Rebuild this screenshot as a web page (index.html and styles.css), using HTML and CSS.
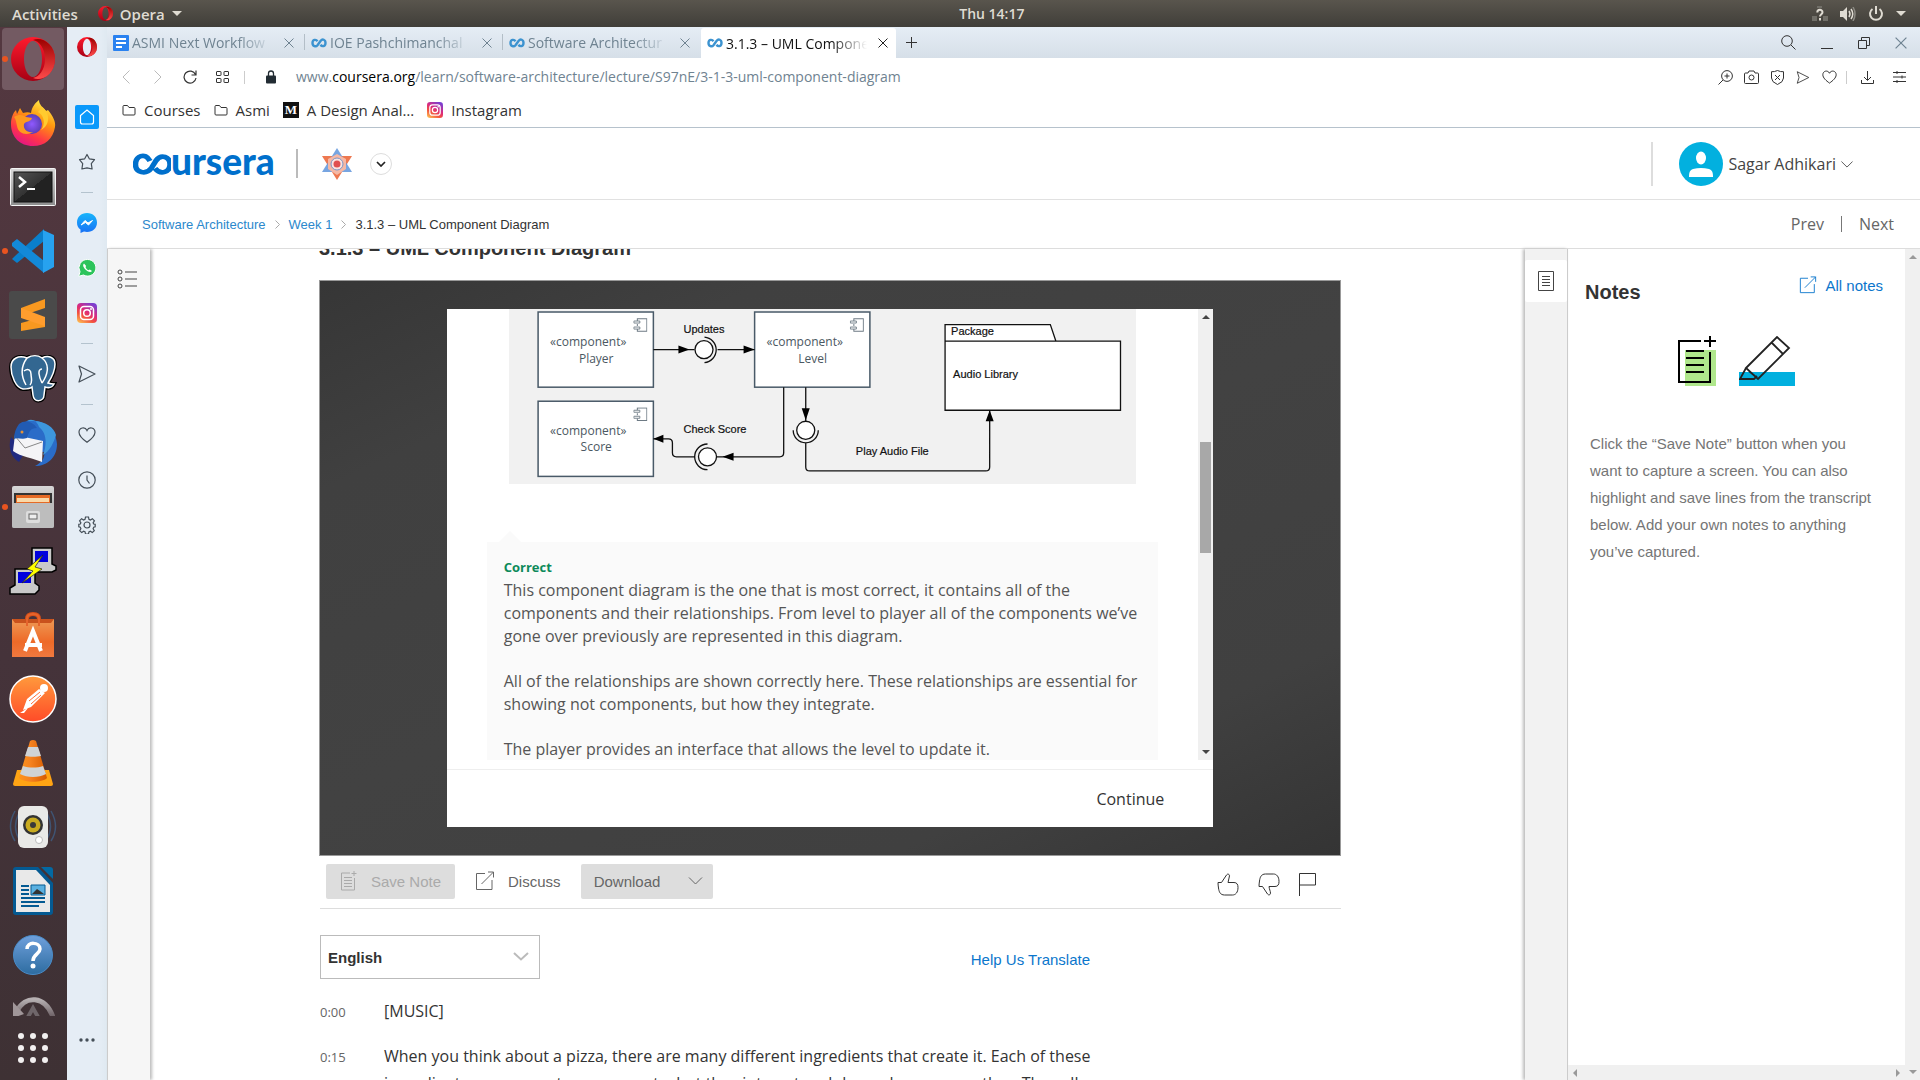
FILE: index.html
```html
<!DOCTYPE html>
<html lang="en">
<head>
<meta charset="utf-8">
<title>3.1.3 – UML Component Diagram</title>
<link rel="stylesheet" href="styles.css">
</head>
<body>
<svg class="defs" width="0" height="0" aria-hidden="true">
  <defs>
    <linearGradient id="opera-front" x1="0" y1="0" x2="0" y2="1"><stop offset="0" stop-color="#ff1b2d"/><stop offset="1" stop-color="#a70014"/></linearGradient>
    <linearGradient id="opera-back" x1="0" y1="0" x2="0" y2="1"><stop offset="0" stop-color="#9c0000"/><stop offset="1" stop-color="#ff4b4b"/></linearGradient>
    <linearGradient id="insta" x1="0.1" y1="1" x2="0.7" y2="0"><stop offset="0" stop-color="#fec053"/><stop offset="0.35" stop-color="#f2513f"/><stop offset="0.6" stop-color="#dd2a7b"/><stop offset="1" stop-color="#7b3fd0"/></linearGradient>
    <linearGradient id="fox" x1="0.8" y1="0" x2="0.3" y2="1"><stop offset="0" stop-color="#fff44f"/><stop offset="0.4" stop-color="#ff980e"/><stop offset="0.75" stop-color="#ff3647"/><stop offset="1" stop-color="#e31587"/></linearGradient>
    <radialGradient id="fox-core"><stop offset="0" stop-color="#9059ff"/><stop offset="1" stop-color="#5b3fb5"/></radialGradient>
    <linearGradient id="metal" x1="0" y1="0" x2="0" y2="1"><stop offset="0" stop-color="#d8d8d8"/><stop offset="1" stop-color="#8e8e8e"/></linearGradient>
    <linearGradient id="screen" x1="0" y1="0" x2="1" y2="1"><stop offset="0" stop-color="#555"/><stop offset="0.5" stop-color="#333"/><stop offset="0.5" stop-color="#222"/></linearGradient>
    <linearGradient id="postman" x1="0" y1="0" x2="0" y2="1"><stop offset="0" stop-color="#ff9a3c"/><stop offset="1" stop-color="#ff4b28"/></linearGradient>
    <linearGradient id="bag" x1="0" y1="0" x2="0" y2="1"><stop offset="0" stop-color="#ee9a55"/><stop offset="0.6" stop-color="#ee6a28"/><stop offset="1" stop-color="#f0793f"/></linearGradient>
    <linearGradient id="cone" x1="0" y1="0" x2="1" y2="0"><stop offset="0" stop-color="#ff9418"/><stop offset="0.4" stop-color="#f58220"/><stop offset="1" stop-color="#d65b00"/></linearGradient>
    <linearGradient id="help" x1="0" y1="0" x2="0" y2="1"><stop offset="0" stop-color="#6fa0dc"/><stop offset="1" stop-color="#2d6ca0"/></linearGradient>
    <linearGradient id="fade" x1="0" y1="0" x2="0" y2="1"><stop offset="0" stop-color="#b5afb1"/><stop offset="1" stop-color="#6b5f63"/></linearGradient>
    <linearGradient id="msgr" x1="0" y1="0" x2="0" y2="1"><stop offset="0" stop-color="#18b5fb"/><stop offset="1" stop-color="#1971f5"/></linearGradient>
    <symbol id="i-opera" viewBox="0 0 44 44"><path d="M22 0a22 22 0 1 0 0 44a22 22 0 1 0 0-44zM22 4c5 0 9 8 9 18s-4 18-9 18-9-8-9-18 4-18 9-18z" fill="url(#opera-front)" fill-rule="evenodd"/><path d="M22 3c8-4 22 3 22 19S30 45 22 41c6-1 12-8 12-19S28 4 22 3z" fill="url(#opera-back)"/></symbol>
    <symbol id="i-close" viewBox="0 0 10 10"><path d="M.5.5l9 9M9.500.5l-9 9" fill="none" stroke="currentColor"/></symbol>
    <symbol id="i-inf" viewBox="0 0 16 10"><path d="M6.500 3.200C5 1 1.500 1.500 1.500 5s3.500 4 5 2.200l3-4.200c2-2.500 5-1.500 5 2s-3.500 4-5 1.800" fill="none" stroke="#3c93d0" stroke-width="2.400"/></symbol>
    <symbol id="i-folder" viewBox="0 0 14 12"><path d="M1 2.500a1 1 0 0 1 1-1h3.500l1.500 2h5a1 1 0 0 1 1 1V10a1 1 0 0 1-1 1H2a1 1 0 0 1-1-1z" fill="none" stroke="#333"/></symbol>
    <symbol id="i-insta" viewBox="0 0 20 20"><rect width="20" height="20" rx="4" fill="url(#insta)"/><rect x="3.500" y="3.500" width="13" height="13" rx="3.500" fill="none" stroke="#fff" stroke-width="1.500"/><circle cx="10" cy="10" r="3.300" fill="none" stroke="#fff" stroke-width="1.500"/><circle cx="14" cy="6" r="1" fill="#fff"/></symbol>
    <symbol id="i-send" viewBox="0 0 18 18"><path d="M1 1l16 8-16 8 2.500-8z" fill="none" stroke="currentColor" stroke-width="1.200" stroke-linejoin="round"/></symbol>
    <symbol id="i-heart" viewBox="0 0 18 16"><path d="M9 15.300C5 12.500 1 9 1 5.300 1 .5 7-.8 9 3.500 11-.8 17 .5 17 5.300 17 9 13 12.500 9 15.300z" fill="none" stroke="currentColor" stroke-width="1.200"/></symbol>
    <symbol id="i-out" viewBox="0 0 20 20"><path d="M10 2.500H1.500v16H17V9M6.500 13L18.500 1M13 1h5.500v5.500" fill="none" stroke="currentColor"/></symbol>
    <symbol id="i-chev" viewBox="0 0 14 8"><path d="M.5.5L7 7 13.500.5" fill="none" stroke="currentColor"/></symbol>
    <symbol id="i-comp" viewBox="0 0 14 14"><path d="M4 3V.7h9.500v12.600H4V11M4 6v2" fill="none" stroke="#6d7a84"/><path d="M.5 3h6v2h-6zM.5 9h6v2h-6z" fill="#fff" stroke="#6d7a84" stroke-width=".9"/></symbol>
    <symbol id="i-thumb" viewBox="0 0 22 23"><path d="M1 9.500h3.500L9.500 2c.8-1.500 3-1 3 .8 0 2-1.300 4.200-1.500 6.700h6c3 0 4 2 4 5 0 5-2.500 7.500-5.500 7.500H7.500C3 22 2 18.500 1.500 15c-.3-2-.5-4-.5-5.500z" fill="none" stroke="currentColor"/></symbol>
  </defs>
</svg>

<header class="topbar">
  <button class="top-item" type="button">Activities</button>
  <button class="top-item top-app" type="button"><svg width="15" height="15"><use href="#i-opera"/></svg>Opera<span class="caret"></span></button>
  <time class="clock">Thu 14:17</time>
  <button class="tray" type="button" aria-label="System menu">
    <svg width="16" height="16" viewBox="0 0 16 16"><path d="M0 10h5v5H0zM11 10h5v5h-5zM5 0h5v2H5z" fill="#716f68"/><path d="M5.300 6.500C5.300 3 10.500 3 10.500 6.200c0 2-2.500 2-2.500 4.300M8 12v2.500" fill="none" stroke="#dfdbd2" stroke-width="2"/></svg>
    <svg width="16" height="14" viewBox="0 0 16 14"><path d="M0 4h3l4-4v14l-4-4H0z" fill="#dfdbd2"/><path d="M9 4q2 3 0 6M11 2q3.500 5 0 10" fill="none" stroke="#dfdbd2" stroke-width="1.500"/><path d="M13 0q4 7 0 14" fill="none" stroke="#8b8982" stroke-width="1.500"/></svg>
    <svg width="16" height="16" viewBox="0 0 16 16"><path d="M4.500 3a6 6 0 1 0 7 0M8 0v8" fill="none" stroke="#dfdbd2" stroke-width="2"/></svg>
    <span class="caret"></span>
  </button>
</header>

<div class="desktop">
  <nav class="dock" aria-label="Applications">
    <div class="dock-list">
      <button class="dock-app running active" type="button" aria-label="Opera"><svg width="44" height="44"><use href="#i-opera"/></svg></button>
      <button class="dock-app" type="button" aria-label="Firefox"><svg width="48" height="48" viewBox="0 0 48 48"><path d="M24 47C11 47 2 38 2 25c0-6 2-11 5-14l1 4 3-6 3 5c3-1 6-1 8 0 1-6 4-10 8-13 0 5 4 7 7 11l2-1c5 6 8 12 7 17-2 12-10 19-22 19z" fill="url(#fox)"/><circle cx="23" cy="25" r="10" fill="url(#fox-core)"/><path d="M5 18c5-3 9-2 12 0l6 1c-1 4-6 3-8 6-1 5 3 9 9 8-6 4-15 2-16-6-1-4-1-7-3-9z" fill="#ff9a1f"/><path d="M29 13c6 3 8 12 3 18 10-5 9-18 1-23z" fill="#ffcb2f"/></svg></button>
      <button class="dock-app" type="button" aria-label="Terminal"><svg width="48" height="40" viewBox="0 0 48 40"><rect x="1.500" y="1.500" width="45" height="37" rx="1" fill="url(#metal)" stroke="#f4f4f4"/><rect x="5" y="5" width="38" height="30" fill="url(#screen)" stroke="#111"/><path d="M10 10l6 5-6 5" fill="none" stroke="#fff" stroke-width="2.500"/><path d="M18 22h8" stroke="#fff" stroke-width="2"/></svg></button>
      <button class="dock-app running" type="button" aria-label="Visual Studio Code"><svg width="44" height="44" viewBox="0 0 44 44"><path d="M1 30l5 4L33 12V0L4 27z" fill="#0a7fcb"/><path d="M1 14l5-4 27 22v12L1 17z" fill="#1389d8"/><path d="M32 1l11 5v32l-11 6z" fill="#27a2ef"/></svg></button>
      <button class="dock-app" type="button" aria-label="Sublime Text"><svg width="48" height="48" viewBox="0 0 48 48"><rect width="48" height="48" rx="3" fill="#4a4a4a"/><path d="M12 17l24-9v9l-15 5 15 5v9l-24 4v-8l15-4-15-4z" fill="#f89820"/><path d="M12 17l24 9v9L12 27z" fill="#ff9d2e"/></svg></button>
      <button class="dock-app" type="button" aria-label="pgAdmin"><svg width="48" height="48" viewBox="0 0 48 48"><g fill="#336791" stroke="#000" stroke-width="4"><path d="M14 34C7 33 2 21 2 12 2 3 10 0 18 3c5-3 11-3 15 0 6-3 13-1 13 6 0 6-3 13-7 19 3 1 5 1 6 1-2 4-6 4-9 3l-1 8c0 7-10 8-11 0l-1-8c-2 2-6 2-9 2z"/></g><path d="M14 34C7 33 2 21 2 12 2 3 10 0 18 3c5-3 11-3 15 0 6-3 13-1 13 6 0 6-3 13-7 19 3 1 5 1 6 1-2 4-6 4-9 3l-1 8c0 7-10 8-11 0l-1-8c-2 2-6 2-9 2zM18 3c-6 8-6 18-1 27M33 3c9 7 5 18 0 25M15 16c4-3 7-1 7 3s2 8-1 11M33 14c-5 0-3 8 0 14" fill="#336791" stroke="#fff" stroke-width="1.500"/></svg></button>
      <button class="dock-app" type="button" aria-label="Thunderbird"><svg width="48" height="48" viewBox="0 0 48 48"><path d="M18 2C31-1 47 8 48 25c0 14-10 22-22 22 8-4 10-9 9-14L6 30C4 20 6 8 18 2z" fill="#2a6cc8"/><path d="M2 18C-1 27 1 38 10 43l6-10z" fill="#202a80"/><path d="M18 2c5-3 10 0 12 6 8 6 8 18 4 28 7-4 11-13 13-20-2-8-12-15-25-14z" fill="#3d97dd"/><path d="M6 16l28 6-1 21C24 39 12 38 4 32z" fill="#f4f4f6"/><path d="M6 17l10 12 17-6" fill="none" stroke="#888"/><path d="M10 5c6-5 14-2 18 4-7 0-8 4-10 10-5 2-10-1-13 1 0-6 2-11 5-15z" fill="#215bb3"/><circle cx="13" cy="13" r="1.500" fill="#e59236"/></svg></button>
      <button class="dock-app running" type="button" aria-label="Files"><svg width="44" height="44" viewBox="0 0 44 44"><rect x="1" y="1" width="42" height="42" rx="2" fill="url(#metal)"/><path d="M3 8h38v10H3z" fill="#333"/><path d="M5 10h34v8H5z" fill="#e56a25"/><path d="M6 13h32v4H6z" fill="#f8d8a8"/><path d="M1 18h42v23a2 2 0 0 1-2 2H3a2 2 0 0 1-2-2z" fill="#bdbdbd"/><rect x="15" y="26" width="14" height="12" rx="2" fill="#ddd"/><rect x="18" y="29" width="8" height="5" fill="#eee" stroke="#666"/></svg></button>
      <button class="dock-app" type="button" aria-label="PuTTY"><svg width="48" height="48" viewBox="0 0 48 48"><g fill="#c9c9c9" stroke="#000" stroke-width="1.500"><path d="M23 1h20v16l4 2v4l-4 2H22l-2-3 3-3z"/><path d="M6 22h20v14l4 3v4l-4 4H1v-6l5-3z"/></g><path d="M26 4h13v11H26zM9 25h13v11H9z" fill="#00d"/><path d="M34 8L18 22l6 2-11 12 20-14-7-2z" fill="#ff0" stroke="#222" stroke-width=".7"/></svg></button>
      <button class="dock-app" type="button" aria-label="Ubuntu Software"><svg width="44" height="46" viewBox="0 0 44 46"><path d="M16 14V7q0-5 6-5t6 5v7" fill="none" stroke="#d9501a" stroke-width="4"/><path d="M1 7h42v38H1z" fill="url(#bag)"/><path d="M1 7h42l-3 4H4z" fill="#c9521d"/><path d="M16 14V7q0-5 6-5t6 5v7" fill="none" stroke="#e5642c" stroke-width="2"/><path d="M14 39l8-20 8 20M14 33h17" fill="none" stroke="#fff" stroke-width="4"/></svg></button>
      <button class="dock-app" type="button" aria-label="Postman"><svg width="48" height="48" viewBox="0 0 48 48"><circle cx="24" cy="24" r="23" fill="url(#postman)" stroke="#fff" stroke-width="1.500"/><path d="M18 24l12-10 6 4-14 14-8 3zM17 34l-6 4h4l4-5z" fill="#fff"/><circle cx="35" cy="13" r="4" fill="#fff"/><path d="M20 26l11-9M22 29l10-9" stroke="#ff7038"/></svg></button>
      <button class="dock-app" type="button" aria-label="VLC"><svg width="42" height="48" viewBox="0 0 42 48"><path d="M5 31h32l4 14q0 2-2 2H3q-2 0-2-2z" fill="#ffa414"/><path d="M18 2q3-2 6 0l11 37c-5 5-23 5-28 0z" fill="url(#cone)"/><path d="M16 8h10l3 9c-4 1-12 1-16 0zM11 27c6 2 14 2 20 0l3 8c-7 4-19 4-26 0z" fill="#cfd3d6"/></svg></button>
      <button class="dock-app" type="button" aria-label="Rhythmbox"><svg width="48" height="48" viewBox="0 0 48 48"><path d="M6 8q-9 16 0 30M10 10q-7 14 0 26M42 8q9 16 0 30M38 10q7 14 0 26" fill="none" stroke="#3f5473" stroke-width="1.500"/><rect x="9" y="3" width="30" height="42" rx="6" fill="#e9e9e7"/><circle cx="24" cy="22" r="10" fill="#333"/><circle cx="24" cy="22" r="7.500" fill="#c9ab20"/><circle cx="24" cy="22" r="3" fill="#3a3a3a"/><circle cx="30" cy="37" r="3.500" fill="#fff" stroke="#bbb"/></svg></button>
      <button class="dock-app" type="button" aria-label="LibreOffice Writer"><svg width="40" height="48" viewBox="0 0 40 48"><path d="M3 0h22l15 16v29q0 3-3 3H3q-3 0-3-3V3q0-3 3-3z" fill="#045a92"/><path d="M28 0h9q3 0 3 3v9z" fill="#0369a3"/><path d="M3 3h20l14 15v27H3z" fill="#e9e9e9"/><path d="M8 19h8M8 23h8M8 27h8M8 31h24M8 35h24M8 39h18" stroke="#045a92" stroke-width="2"/><path d="M18 18h14v10H18z" fill="#5ab0e0" stroke="#045a92"/><path d="M19 27l5-5 3 2 4 3z" fill="#333"/></svg></button>
      <button class="dock-app" type="button" aria-label="Help"><svg width="40" height="40" viewBox="0 0 40 40"><circle cx="20" cy="20" r="19.500" fill="url(#help)" stroke="#4a8cc8"/><path d="M14 14c0-8 13-7 13 0 0 5-7 5-7 12" fill="none" stroke="#fff" stroke-width="3.500"/><circle cx="20" cy="31" r="2.500" fill="#fff"/></svg></button>
      <button class="dock-app" type="button" aria-label="Software Updater"><svg width="44" height="44" viewBox="0 0 44 44"><path d="M6 14C14-2 34-2 42 20" fill="none" stroke="url(#fade)" stroke-width="5"/><path d="M2 5v16l11-4z" fill="#a09699"/><path d="M17 20l5-9 5 9" fill="none" stroke="#6f666a" stroke-width="4"/></svg></button>
    </div>
    <button class="dock-grid" type="button" aria-label="Show applications"><svg width="30" height="30" viewBox="0 0 30 30" fill="#f2f0f0"><circle cx="3" cy="3" r="3"/><circle cx="15" cy="3" r="3"/><circle cx="27" cy="3" r="3"/><circle cx="3" cy="15" r="3"/><circle cx="15" cy="15" r="3"/><circle cx="27" cy="15" r="3"/><circle cx="3" cy="27" r="3"/><circle cx="15" cy="27" r="3"/><circle cx="27" cy="27" r="3"/></svg></button>
  </nav>

  <aside class="side" aria-label="Opera sidebar">
    <button class="side-logo" type="button" aria-label="Opera menu"><svg width="20" height="20"><use href="#i-opera"/></svg></button>
    <button class="side-item" type="button" aria-label="Speed dial"><svg width="24" height="24" viewBox="0 0 24 24"><rect width="24" height="24" rx="2" fill="#0a99fb"/><path d="M5.500 10.500L12 5l6.500 5.500V17q0 2-2 2h-9q-2 0-2-2z" fill="none" stroke="#fff" stroke-width="1.200"/></svg></button>
    <button class="side-item" type="button" aria-label="Bookmarks"><svg width="18" height="18" viewBox="0 0 18 18"><path d="M9 1.500l2.300 4.300 5.200.9-3.200 4 .8 5.300L9 14.800 3.900 16l.8-5.300-3.200-4 5.200-.9z" fill="none" stroke="currentColor" stroke-width="1.200" stroke-linejoin="round"/></svg></button>
    <hr>
    <button class="side-item" type="button" aria-label="Messenger"><svg width="20" height="20" viewBox="0 0 20 20"><path d="M10 0c6 0 10 4 10 9.500S16 19 10 19l-3-.5L3.500 20v-3.500C1 15 0 12.500 0 9.500 0 4 4 0 10 0z" fill="url(#msgr)"/><path d="M4 12l4-4.500 3 2.500 4.500-2.500-4 4.500-3-2.500z" fill="#fff" stroke="#fff"/></svg></button>
    <button class="side-item" type="button" aria-label="WhatsApp"><svg width="18" height="18" viewBox="0 0 18 18"><path d="M9.500.5a8.300 8.300 0 1 1-4 15.500L.7 17.300 2 12.800A8.300 8.300 0 0 1 9.500.5z" fill="#2cc45c" stroke="#fff"/><path d="M6 4.500c-2 2 0 4.500 2 6.500 2 1.700 4.500 3 6 1l-2.200-1.500-1.300.8C9 10.500 8 9.500 7.500 8l.7-1z" fill="#fff"/></svg></button>
    <button class="side-item" type="button" aria-label="Instagram"><svg width="20" height="20"><use href="#i-insta"/></svg></button>
    <hr>
    <button class="side-item" type="button" aria-label="My Flow"><svg width="18" height="18"><use href="#i-send"/></svg></button>
    <hr>
    <button class="side-item" type="button" aria-label="Favorites"><svg width="18" height="16"><use href="#i-heart"/></svg></button>
    <button class="side-item" type="button" aria-label="History"><svg width="18" height="18" viewBox="0 0 18 18"><circle cx="9" cy="9" r="8.200" fill="none" stroke="currentColor" stroke-width="1.200"/><path d="M9 4.500V9l2.500 3.500" fill="none" stroke="currentColor" stroke-width="1.200"/></svg></button>
    <button class="side-item" type="button" aria-label="Settings"><svg width="18" height="18" viewBox="0 0 18 18" fill="none" stroke="currentColor" stroke-width="1.200"><circle cx="9" cy="9" r="3"/><path d="M7.500 1h3l.4 2.300 1.500.7 2-1.300 2 2.100-1.300 2 .6 1.200 1.500.3v2.400l-1.500.5-.6 1.500 1.200 1.900-2 2-2-1.300-1.400.6-.4 2.100h-3l-.4-2.100-1.400-.6-2 1.300-2-2 1.200-1.900-.6-1.500L.8 10.700V8.300L2.300 8l.6-1.200-1.300-2 2-2.100 2 1.300L7 3.300z"/></svg></button>
    <button class="side-item side-more" type="button" aria-label="More"><svg width="16" height="4" viewBox="0 0 16 4" fill="#454f58"><circle cx="2" cy="2" r="1.700"/><circle cx="8" cy="2" r="1.700"/><circle cx="14" cy="2" r="1.700"/></svg></button>
  </aside>

  <div class="browser">
    <div class="tabs">
      <div class="tab"><svg width="16" height="16" viewBox="0 0 16 16"><rect width="16" height="16" rx="1" fill="#2a82f0"/><path d="M3 4h10M3 8h10M3 12h6" stroke="#fff" stroke-width="2"/></svg><span class="tab-title">ASMI Next Workflow</span><button type="button" aria-label="Close tab"><svg width="10" height="10"><use href="#i-close"/></svg></button></div>
      <div class="tab"><svg width="16" height="10"><use href="#i-inf"/></svg><span class="tab-title">IOE Pashchimanchal</span><button type="button" aria-label="Close tab"><svg width="10" height="10"><use href="#i-close"/></svg></button></div>
      <div class="tab"><svg width="16" height="10"><use href="#i-inf"/></svg><span class="tab-title">Software Architectur</span><button type="button" aria-label="Close tab"><svg width="10" height="10"><use href="#i-close"/></svg></button></div>
      <div class="tab current"><svg width="16" height="10"><use href="#i-inf"/></svg><span class="tab-title">3.1.3 – UML Compone</span><button type="button" aria-label="Close tab"><svg width="10" height="10"><use href="#i-close"/></svg></button></div>
      <button class="new-tab" type="button" aria-label="New tab"><svg width="11" height="11" viewBox="0 0 11 11"><path d="M5.500 0v11M0 5.500h11" stroke="#333"/></svg></button>
      <div class="win-controls">
        <button type="button" aria-label="Search tabs"><svg width="15" height="15" viewBox="0 0 15 15"><circle cx="6" cy="6" r="5.300" fill="none" stroke="#333"/><path d="M10 10l4.500 4.500" stroke="#333"/></svg></button>
        <button type="button" aria-label="Minimize"><svg width="12" height="12" viewBox="0 0 12 12"><path d="M0 11.500h12" stroke="#333"/></svg></button>
        <button type="button" aria-label="Restore"><svg width="12" height="12" viewBox="0 0 12 12"><path d="M.5 3.500h8v8h-8zM3.500 3.500v-3h8v8h-3" fill="none" stroke="#333"/></svg></button>
        <button type="button" aria-label="Close window"><svg width="12" height="12"><use href="#i-close"/></svg></button>
      </div>
    </div>

    <div class="address">
      <div class="nav-buttons">
        <button type="button" aria-label="Back" disabled><svg width="8" height="14" viewBox="0 0 8 14"><path d="M7.500.5L1 7l6.500 6.500" fill="none" stroke="#bbb"/></svg></button>
        <button type="button" aria-label="Forward" disabled><svg width="8" height="14" viewBox="0 0 8 14"><path d="M.5.5L7 7 .5 13.500" fill="none" stroke="#bbb"/></svg></button>
        <button type="button" aria-label="Reload"><svg width="14" height="14" viewBox="0 0 14 14"><path d="M12.500 4.500A6 6 0 1 0 13 8M13 .5v4.500H8.500" fill="none" stroke="#333" stroke-width="1.200"/></svg></button>
        <button type="button" aria-label="Speed dial"><svg width="13" height="12" viewBox="0 0 13 12" fill="none" stroke="#333"><rect x=".5" y=".5" width="4.500" height="4" rx=".5"/><rect x="8" y=".5" width="4.500" height="4" rx=".5"/><rect x=".5" y="7.500" width="4.500" height="4" rx=".5"/><rect x="8" y="7.500" width="4.500" height="4" rx=".5"/></svg></button>
      </div>
      <span class="bar-rule"></span>
      <svg class="lock" width="10" height="14" viewBox="0 0 10 14"><path d="M2.500 6V3.500a2.500 2.500 0 0 1 5 0V6" fill="none" stroke="#222c33" stroke-width="1.300"/><rect y="5.500" width="10" height="8" rx="1" fill="#222c33"/></svg>
      <span class="url">www.<b>coursera.org</b>/learn/software-architecture/lecture/S97nE/3-1-3-uml-component-diagram</span>
      <div class="page-actions">
        <button type="button" aria-label="Zoom"><svg width="15" height="15" viewBox="0 0 15 15" fill="none" stroke="#333"><circle cx="9" cy="6" r="5.400"/><path d="M5 10L.5 14.500M9 3.500v5M6.500 6h5"/></svg></button>
        <button type="button" aria-label="Snapshot"><svg width="15" height="14" viewBox="0 0 15 14" fill="none" stroke="#333"><path d="M1.500 3H4l1-2h5l1 2h2.500q1 0 1 1v8.500q0 1-1 1h-12q-1 0-1-1V4q0-1 1-1z"/><circle cx="7.500" cy="7.500" r="2.500"/></svg></button>
        <button type="button" aria-label="Ad blocker"><svg width="13" height="15" viewBox="0 0 13 15" fill="none" stroke="#333"><path d="M6.500.5q3 1.500 6 1.200V8q0 4-6 6.500Q.5 12 .5 8V1.700q3 .3 6-1.200zM4 5l5 5M9 5l-5 5"/></svg></button>
        <button type="button" aria-label="Send to My Flow"><svg width="14" height="13"><use href="#i-send"/></svg></button>
        <button type="button" aria-label="Add bookmark"><svg width="15" height="14"><use href="#i-heart"/></svg></button>
        <span class="bar-rule"></span>
        <button class="wide" type="button" aria-label="Downloads"><svg width="13" height="13" viewBox="0 0 13 13" fill="none" stroke="#333"><path d="M6.500 0v9M3 6l3.500 3.500L10 6M.5 9v3.500h12V9"/></svg></button>
        <button class="wide" type="button" aria-label="Easy setup"><svg width="13" height="12" viewBox="0 0 13 12" fill="none" stroke="#333"><path d="M0 1.500h13M0 6h13M0 10.500h13M4 0v3M9 4.500v3M4 9v3"/></svg></button>
      </div>
    </div>

    <div class="bookmarks">
      <a href="#"><svg width="14" height="12"><use href="#i-folder"/></svg>Courses</a>
      <a href="#"><svg width="14" height="12"><use href="#i-folder"/></svg>Asmi</a>
      <a href="#"><span class="medium">M</span>A Design Anal…</a>
      <a href="#"><svg width="16" height="16"><use href="#i-insta"/></svg>Instagram</a>
    </div>

    <div class="page">
      <header class="site-head">
        <a class="brand" href="#" aria-label="coursera"><svg width="38" height="30" viewBox="0 0 38 30"><path d="M17 10.500C12-.5 2.500 5 2.500 14.500S13 27 18.500 18.500L23 10C28.500 1.500 37 6 37 14.500S28 27.500 22 19" transform="translate(0 3) scale(1 .86)" fill="none" stroke="#0070cc" stroke-width="5.500"/></svg><span>ursera</span></a>
        <span class="brand-rule"></span>
        <svg class="emblem" width="32" height="34" viewBox="0 0 32 34"><path d="M1 9h30L16 33z" fill="#ee7850"/><path d="M16 1l15 24H1z" fill="#5f95dc" opacity=".85"/><path d="M7 12l9-5 9 5v10l-9 6-9-6z" fill="#f5b8a5"/><circle cx="16" cy="17" r="6" fill="#fbe3df" stroke="#7a96c8"/><circle cx="16" cy="17" r="3.500" fill="#e05050"/></svg>
        <button class="round" type="button" aria-label="Switch programme"><svg width="10" height="6" viewBox="0 0 10 6"><path d="M1 1l4 4 4-4" fill="none" stroke="#222" stroke-width="1.700"/></svg></button>
        <button class="user" type="button"><svg width="44" height="44" viewBox="0 0 44 44"><circle cx="22" cy="22" r="22" fill="#02b0df"/><ellipse cx="22" cy="16" rx="5" ry="6.500" fill="#fff"/><path d="M10 35c0-5 1-7 4-8q8-2 16 0c3 1 4 3 4 8z" fill="#fff"/></svg><span>Sagar Adhikari</span><svg class="user-chev" width="12" height="7"><use href="#i-chev"/></svg></button>
      </header>

      <div class="crumbs">
        <nav class="trail" aria-label="Breadcrumb">
          <a href="#">Software Architecture</a>
          <svg width="5" height="9" viewBox="0 0 5 9"><path d="M.5.5l4 4-4 4" fill="none" stroke="#aaa"/></svg>
          <a href="#">Week 1</a>
          <svg width="5" height="9" viewBox="0 0 5 9"><path d="M.5.5l4 4-4 4" fill="none" stroke="#aaa"/></svg>
          <span>3.1.3 – UML Component Diagram</span>
        </nav>
        <nav class="pager" aria-label="Lecture"><a href="#">Prev</a><span class="pager-rule"></span><a href="#">Next</a></nav>
      </div>

      <div class="body">
        <aside class="left-rail"><button type="button" aria-label="Course outline"><svg width="20" height="20" viewBox="0 0 20 20" fill="none" stroke="#444"><circle cx="3" cy="3" r="2"/><circle cx="3" cy="10" r="2"/><circle cx="3" cy="17" r="2"/><path d="M8 3h12M8 10h12M8 17h12"/></svg></button></aside>

        <main class="lecture">
          <h1>3.1.3 – UML Component Diagram</h1>
          <section class="video">
            <div class="quiz">
              <div class="quiz-view">
                <div class="quiz-scroll">
                  <svg class="diagram" viewBox="0 0 626 175" role="img" aria-label="UML component diagram">
                    <rect width="626" height="175" fill="#f1f1f1"/>
                    <g fill="#fff" stroke="#495a68" stroke-width="1.500"><rect x="29" y="3" width="115" height="75"/><rect x="245" y="3" width="115" height="75"/><rect x="29" y="92" width="115" height="75"/></g>
                    <use href="#i-comp" x="124" y="9" width="14" height="14"/><use href="#i-comp" x="340" y="9" width="14" height="14"/><use href="#i-comp" x="124" y="98" width="14" height="14"/>
                    <g class="d-comp"><text x="79" y="37">«component»</text><text x="87" y="54">Player</text><text x="295" y="37">«component»</text><text x="303" y="54">Level</text><text x="79" y="126">«component»</text><text x="87" y="142">Score</text></g>
                    <g fill="none" stroke="#111" stroke-width="1.300">
                      <path d="M144 40.500h41M208 40.500h37M195 28a12.800 12.800 0 0 1 0 25.500M144 129.500h15q4 0 4 4v10q0 4 4 4h18M207 147.500h63q4 0 4-4V78M198 134.700a12.800 12.800 0 0 0 0 25.600M296 78v34M283.500 121a12.500 12.500 0 0 0 25 0M296 134v23.500q0 4 4 4h175.500q4 0 4-4V101"/>
                      <g fill="#fff"><circle cx="194.500" cy="40.500" r="9"/><circle cx="198" cy="147.500" r="9"/><circle cx="296" cy="121" r="9"/><path d="M435 32V15.500h105l5.500 16.500M435 32h175v69H435z"/></g>
                    </g>
                    <path d="M169 36.500l11 4-11 4zM234 36.500l11 4-11 4zM154 125.500l-10 4 10 4zM224 143.500l-11 4 11 4zM292 99l4 12 4-12zM475.500 112l4-11 4 11z" fill="#000"/>
                    <g class="d-label"><text x="174" y="24">Updates</text><text x="174" y="124">Check Score</text><text x="346" y="146">Play Audio File</text><text x="441" y="26">Package</text><text x="443" y="69">Audio Library</text></g>
                  </svg>
                  <div class="feedback">
                    <strong>Correct</strong>
                    <p>This component diagram is the one that is most correct, it contains all of the components and their relationships. From level to player all of the components we’ve gone over previously are represented in this diagram.</p>
                    <p>All of the relationships are shown correctly here. These relationships are essential for showing not components, but how they integrate.</p>
                    <p>The player provides an interface that allows the level to update it.</p>
                  </div>
                </div>
                <div class="scrollbar dark"><i class="up"></i><i class="thumb"></i><i class="down"></i></div>
              </div>
              <div class="quiz-foot"><button type="button">Continue</button></div>
            </div>
          </section>

          <div class="actions">
            <button class="act filled muted" type="button" disabled><svg width="18" height="20" viewBox="0 0 18 20" fill="none" stroke="currentColor"><path d="M10 2H1.500v17h13V7M4 6.500h8M4 9.500h8M4 12.500h8M4 15.500h8M11.500 2.500h5M14 0v5"/></svg>Save Note</button>
            <button class="act" type="button"><svg width="20" height="20"><use href="#i-out"/></svg>Discuss</button>
            <button class="act filled download" type="button">Download<svg width="15" height="8"><use href="#i-chev"/></svg></button>
            <div class="react">
              <button type="button" aria-label="Like"><svg width="22" height="23"><use href="#i-thumb"/></svg></button>
              <button type="button" aria-label="Dislike"><svg width="22" height="23" viewBox="0 0 22 23"><g transform="translate(0 23) scale(1 -1)"><use href="#i-thumb" width="22" height="23"/></g></svg></button>
              <button type="button" aria-label="Report"><svg width="17" height="23" viewBox="0 0 17 23"><path d="M.5 23V.500h16V12H.5" fill="none" stroke="currentColor"/></svg></button>
            </div>
          </div>

          <div class="transcript">
            <div class="lang-row">
              <div class="lang"><select aria-label="Transcript language"><option>English</option></select><svg width="16" height="9" viewBox="0 0 16 9"><path d="M1 1l7 6.500L15 1" fill="none" stroke="#bbb" stroke-width="2"/></svg></div>
              <a href="#">Help Us Translate</a>
            </div>
            <div class="line"><time>0:00</time><p>[MUSIC]</p></div>
            <div class="line"><time>0:15</time><p>When you think about a pizza, there are many different ingredients that create it. Each of these ingredients, components are separate, but they interact and depend on one another. They all</p></div>
          </div>
        </main>

        <aside class="right-rail"><button type="button" aria-label="Notes"><svg width="16" height="20" viewBox="0 0 16 20" fill="none" stroke="#444"><path d="M.5.500h15v19H.5zM4 5.500h8M4 8.500h8M4 11.500h8M4 14.500h8"/></svg></button></aside>

        <aside class="notes">
          <div class="notes-main">
            <div class="notes-head"><h2>Notes</h2><a href="#"><svg width="18" height="18"><use href="#i-out"/></svg>All notes</a></div>
            <div class="notes-art">
              <svg width="38" height="50" viewBox="0 0 38 50"><path d="M7 14h31v36H7z" fill="#b0e78c"/><path d="M23 5H1v41h31V16M8 15h18M8 22h18M8 29h18M8 36h18M26 5h12M32 0v11" fill="none" stroke="#000" stroke-width="2"/></svg>
              <svg width="56" height="50" viewBox="0 0 56 50"><path d="M0 36h56v14H0z" fill="#02b0df"/><path d="M7 32L38 1l12 11-31 31zM33 7l11 11M7 32L1 43h14l3-3M10 35l7 6" fill="none" stroke="#222" stroke-width="1.800"/></svg>
            </div>
            <p>Click the “Save Note” button when you want to capture a screen. You can also highlight and save lines from the transcript below. Add your own notes to anything you’ve captured.</p>
            <div class="hbar"><i class="left"></i><i class="right"></i></div>
          </div>
          <div class="scrollbar"><i class="up"></i><i class="down"></i></div>
        </aside>
      </div>
    </div>
  </div>
</div>
</body>
</html>
```

FILE: styles.css
```css
*{box-sizing:border-box}
body{margin:0;height:100vh;overflow:hidden;display:flex;flex-direction:column;background:#fff;color:#333;font:16px "Open Sans","Noto Sans",sans-serif}
button{margin:0;padding:0;border:0;background:none;color:inherit;font:inherit;display:flex;align-items:center;justify-content:center}
a{text-decoration:none;color:#0b76cc}
h1,h2,p,hr{margin:0}
svg{flex:none;display:block}
.defs{position:absolute}

/* desktop bar */
.topbar{flex:none;height:27px;padding:0 14px 0 12px;display:grid;grid-template-columns:auto 1fr auto 1fr;align-items:center;background:linear-gradient(#59554d,#403e39);color:#dfdbd2;font-size:15px;font-weight:600}
.top-app{gap:7px;margin-left:20px;justify-self:start}
.caret{border:5px solid transparent;border-top-color:#dfdbd2;border-bottom:0}
.clock{font-size:14px}
.tray{gap:12px;justify-self:end}

.desktop{flex:1;min-height:0;display:flex}
.dock{flex:none;width:67px;display:flex;flex-direction:column;background:linear-gradient(#543840,#45333a 60%,#3e3134)}
.dock-list{flex:1;min-height:0;overflow:hidden}
.dock-app{position:relative;width:62px;height:62px;margin:1px 2px;border-radius:4px}
.dock-app + .dock-app{margin-top:2px}
.dock-app.active{background:#735a62}
.dock-app.running::before{content:"";position:absolute;left:0;top:28px;width:6px;height:6px;border-radius:50%;background:#e95420}
.dock-grid{flex:none;width:66px;height:64px}

.side{flex:none;width:40px;display:flex;flex-direction:column;background:linear-gradient(90deg,#e5edf5 80%,#dfe9f1);color:#454f58}
.side-logo{height:40px;margin-bottom:27px}
.side-item{height:45px}
.side hr{height:1px;width:12px;margin:8px auto 7px;border:0;background:#b4c3ce}
.side-more{margin-top:auto;margin-bottom:18px}

.browser{flex:1;min-width:0;display:flex;flex-direction:column}
.tabs{flex:none;height:31px;display:flex;background:linear-gradient(#e5edf5,#d6dfe8);font-size:14px;color:#6f8391}
.tab{width:198px;display:flex;align-items:center;gap:3px;padding:0 11px 0 6px;position:relative}
.tab:nth-child(-n+2)::after{content:"";position:absolute;right:0;top:7px;height:16px;width:1px;background:#b3bec7}
.tab-title{flex:1;overflow:hidden;white-space:nowrap;margin-right:8px;-webkit-mask-image:linear-gradient(90deg,#000 75%,transparent);mask-image:linear-gradient(90deg,#000 75%,transparent)}
.tab.current{width:195px;margin-top:1px;background:#fff;color:#111;border-radius:3px 3px 0 0;padding-right:8px}
.tab.current button{color:#222}
.new-tab{width:31px}
.win-controls{margin-left:auto;display:flex;align-items:center;gap:25px;padding-right:13px}

.address{flex:none;height:38px;display:flex;align-items:center}
.nav-buttons{display:flex;margin-left:3px}
.nav-buttons button{width:32px}
.bar-rule{width:1px;height:13px;background:#ccc}
.nav-buttons + .bar-rule{margin-left:6px}
.lock{margin:0 20px 0 21px}
.url{color:#6f8391;font-size:14px;line-height:20px;white-space:nowrap}
.url b{font-weight:400;color:#000}
.page-actions{margin-left:auto;display:flex;align-items:center;padding-right:5px}
.page-actions button{width:26px}
.page-actions .bar-rule{margin:0 4px}
.page-actions .wide{width:32px}

.bookmarks{flex:none;height:32px;padding:0 15px 4px;display:flex;align-items:center;gap:13px;border-bottom:1px solid #b6c2cc;font-size:15px}
.bookmarks a{display:flex;align-items:center;gap:8px;color:#333}
.medium{width:16px;height:16px;background:#111;color:#fff;font:bold 13px/16px "Liberation Serif",serif;text-align:center}

/* page */
.page{flex:1;min-height:0;display:flex;flex-direction:column}
.site-head{flex:none;height:72px;display:flex;align-items:center;padding:0 67px 0 26px;border-bottom:1px solid #e1e1e1}
.brand{display:flex;align-items:center;color:#0070cc}
.brand span{width:104px;font:900 37px/48px Lato,sans-serif;padding-bottom:5px}
.brand-rule{width:2px;height:29px;margin:0 23px 0 21px;background:#bbb}
.round{width:22px;height:22px;margin-left:17px;border:1px solid #ddd;border-radius:50%}
.user{margin-left:auto;height:44px;padding-left:26px;gap:5px;border-left:2px solid #ddd;color:#444}
.user-chev{margin-top:2px}
.crumbs{flex:none;height:49px;display:flex;align-items:center;justify-content:space-between;padding:0 26px 0 35px;border-bottom:1px solid #ddd}
.trail{display:flex;align-items:center;gap:9px;font:13px "Liberation Sans",Arial,sans-serif}
.trail a{color:#2b88cc}
.pager{display:flex;align-items:center;gap:17px}
.pager a{color:#666}
.pager-rule{width:1px;height:16px;background:#777}

.body{flex:1;min-height:0;display:flex}
.left-rail{flex:none;width:43px;background:#f6f6f6;border-left:1px solid #ccc;box-shadow:2px 0 3px #bbb;z-index:1}
.left-rail button{width:38px;height:60px}
.lecture{flex:1;min-width:0;overflow:hidden;padding:0 184px 0 169px}
.lecture h1{margin:-13px 0 19px;font:bold 20px/25px "Liberation Sans",Arial,sans-serif}
.video{aspect-ratio:1022/576;padding:28px 12.4%;border:1px solid #999;background:linear-gradient(155deg,#363636,#404040 20%,#424242 50%,#404040 80%,#343434);display:flex}
.quiz{flex:1;min-width:0;display:flex;flex-direction:column;background:#fff}
.quiz-view{flex:1;min-height:0;display:flex}
.quiz-scroll{flex:1;min-width:0;overflow:hidden;padding:0 40px}
.diagram{width:calc(100% - 44px);margin:0 auto 58px}
.d-comp{font:12px "Open Sans","Noto Sans",sans-serif;fill:#4b5862;text-anchor:middle}
.d-label{font:11px "Liberation Sans",Arial,sans-serif;fill:#111;stroke:#111;stroke-width:.2}
.feedback{position:relative;padding:15px 16px 40px 17px;background:#fafafa;color:#555}
.feedback::before{content:"";position:absolute;left:12px;top:-11px;border:11px solid transparent;border-top:0;border-bottom-color:#fafafa}
.feedback strong{display:block;font-size:13px;line-height:20px;margin-bottom:2px;color:#0d8a5a}
.feedback p{line-height:23px;margin-bottom:22px}
.quiz-foot{flex:none;height:58px;margin-top:9px;border-top:1px solid #eee;padding-right:49px;display:flex;justify-content:flex-end}

.scrollbar{flex:none;width:15px;background:#f0f0f0;display:flex;flex-direction:column;align-items:center;padding:6px 0}
.scrollbar i,.hbar i{border:4px solid transparent}
.scrollbar .up{border-bottom-color:#999;border-top:0}
.scrollbar .down{border-top-color:#999;border-bottom:0;margin-top:auto}
.dark .up{border-bottom-color:#444}
.dark .down{border-top-color:#444}
.scrollbar .thumb{width:11px;height:111px;border:0;margin-top:123px;background:#a8a8a8}

.actions{display:flex;align-items:center;height:53px;margin-left:1px;padding:0 25px 2px 6px;border-bottom:1px solid #ddd;font:15px "Liberation Sans",Arial,sans-serif;color:#666}
.act{height:35px;gap:13px;border-radius:2px;margin-right:20px}
.filled{background:#ddd}
.muted{width:129px;color:#aaa}
.download{width:132px;gap:28px;padding-left:4px}
.react{margin-left:auto;display:flex;gap:19px;color:#333;padding-top:6px}
.transcript{padding:26px 0 0 1px}
.lang-row{max-width:770px;display:flex;align-items:center;justify-content:space-between;margin-bottom:19px;font:15px "Liberation Sans",Arial,sans-serif}
.lang{position:relative;width:220px}
.lang select{appearance:none;width:100%;height:44px;padding:0 7px;border:1px solid #bbb;border-radius:0;background:#fff;font:bold 15px "Liberation Sans",Arial,sans-serif;color:#333}
.lang svg{position:absolute;right:11px;top:17px;pointer-events:none}
.lang-row a{padding-top:4px}
.line{max-width:790px;display:grid;grid-template-columns:64px 1fr;align-items:baseline;margin-bottom:18px}
.line time{font-size:13px;line-height:20px;color:#666}
.line p{line-height:27px}

.right-rail{flex:none;width:43px;padding-top:11px;background:#f2f2f2;border-right:1px solid #ccc;box-shadow:-2px 0 3px #bbb}
.right-rail button{width:42px;height:42px;background:#fff;border-radius:2px}
.notes{flex:none;width:352px;display:flex}
.notes-main{flex:1;display:flex;flex-direction:column;font:15px "Liberation Sans",Arial,sans-serif}
.notes-head{display:flex;justify-content:space-between;padding:27px 22px 0 17px}
.notes-head h2{font-size:20px;line-height:32px}
.notes-head a{display:flex;gap:8px;height:18px;align-items:center}
.notes-art{display:flex;justify-content:center;gap:23px;margin-top:28px}
.notes-main p{margin:44px 26px 0 22px;line-height:27px;color:#757575}
.hbar{margin-top:auto;height:15px;background:#f0f0f0;display:flex;align-items:center;justify-content:space-between;padding:0 5px}
.hbar .left{border-right-color:#999;border-left:0}
.hbar .right{border-left-color:#999;border-right:0}
```
